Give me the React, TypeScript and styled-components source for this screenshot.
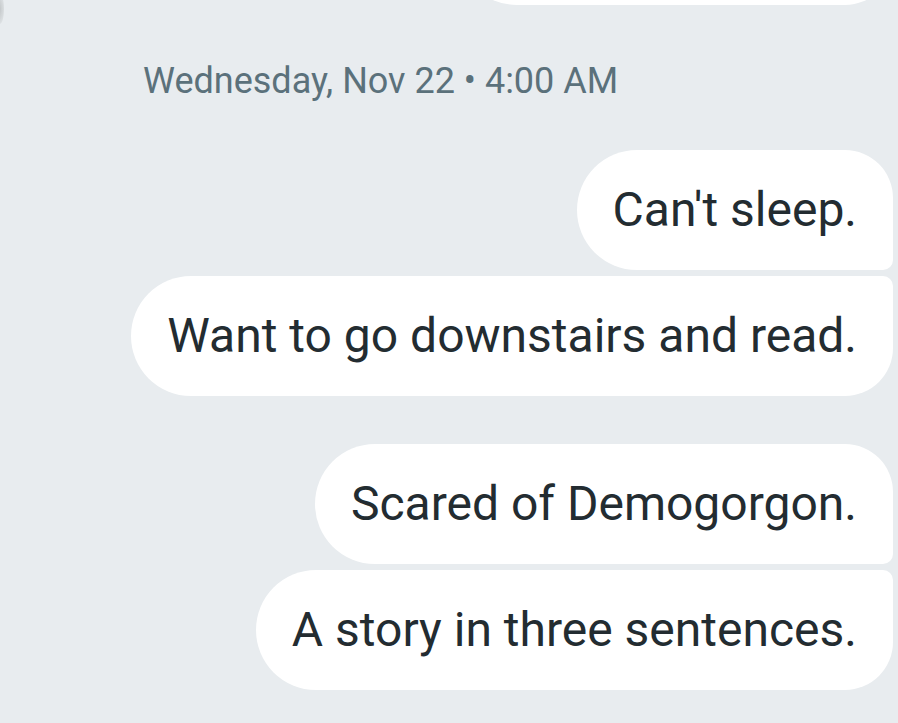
import React from 'react';
import styled, { createGlobalStyle } from 'styled-components';

const GlobalStyle = createGlobalStyle`
    html, body {
        margin: 0;
        padding: 0;
        background: #e8ecef;
    }
    body {
        font-family: Roboto, 'Noto Sans', 'Liberation Sans', sans-serif;
    }
`;

const Thread = styled.div`
    position: relative;
    height: 723px;
    overflow: hidden;
    display: flex;
    flex-direction: column;
    align-items: flex-end;
    padding-right: 5px;
    box-sizing: border-box;

    /* bit of the phone edge showing at the top left */
    &:before {
        content: '';
        position: absolute;
        top: -6px;
        left: -4px;
        width: 8px;
        height: 30px;
        border-radius: 50%;
        background: radial-gradient(ellipse at left, #a4a8ab 0%, #ccd0d2 45%, rgba(232, 236, 239, 0) 100%);
    }
`;

const Group = styled.div<{ $offset?: number }>`
    display: flex;
    flex-direction: column;
    align-items: flex-end;
    gap: 6px;
    margin-top: ${(p) => p.$offset ?? 0}px;
`;

const DateLine = styled.div`
    align-self: flex-start;
    margin: 54px 0 47px 143px;
    font-size: 36px;
    line-height: 44px;
    color: #5b717b;
`;

type Pos = 'single' | 'first' | 'last';

const radii: Record<Pos, string> = {
    single: '60px 48px 48px 60px',
    first: '60px 48px 10px 60px',
    last: '60px 10px 48px 60px',
};

const Bubble = styled.div<{ $pos: Pos }>`
    background: #ffffff;
    color: #232c31;
    font-size: 48px;
    line-height: 56px;
    padding: 32px 36px;
    border-radius: ${(p) => radii[p.$pos]};
    white-space: nowrap;
`;

const Stub = styled(Bubble)`
    width: 364px;
    color: transparent;
`;

export default function App() {
    return (
        <>
            <GlobalStyle />
            <Thread>
                <Group $offset={-115}>
                    <Stub $pos="last">&nbsp;</Stub>
                </Group>
                <DateLine>Wednesday, Nov 22 • 4:00 AM</DateLine>
                <Group>
                    <Bubble $pos="first">Can't sleep.</Bubble>
                    <Bubble $pos="last">Want to go downstairs and read.</Bubble>
                </Group>
                <Group $offset={48}>
                    <Bubble $pos="first">Scared of Demogorgon.</Bubble>
                    <Bubble $pos="last">A story in three sentences.</Bubble>
                </Group>
            </Thread>
        </>
    );
}
